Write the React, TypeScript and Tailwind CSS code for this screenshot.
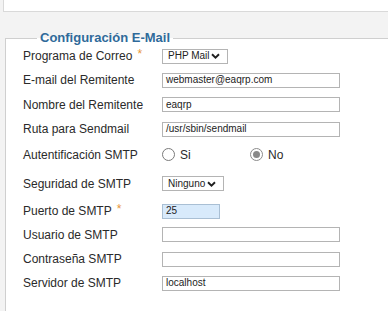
import React from "react";

const font = { fontFamily: '"Liberation Sans", Arial, sans-serif' };

const Star = () => <span className="ml-[5px] text-[12px] text-[#e8963a] relative -top-[2px]">*</span>;

const Chevron = () => (
  <svg width="9" height="6" viewBox="0 0 9 6" className="ml-auto">
    <path d="M1 1.2 L4.5 4.6 L8 1.2" fill="none" stroke="#1f1f1f" strokeWidth="1.9" />
  </svg>
);

const TextBox = ({ value = "", w = "w-[178px]", blue = false }: { value?: string; w?: string; blue?: boolean }) => (
  <div
    className={`${w} h-[15px] border flex items-center pl-[3px] text-[10px] text-[#222] leading-none ${
      blue ? "bg-[#d8eafb] border-[#a9bfd4]" : "bg-white border-[#b4b4b4]"
    }`}
  >
    {value}
  </div>
);

const SelectBox = ({ value, w }: { value: string; w: string }) => (
  <div className={`${w} h-[15px] border border-[#b4b4b4] bg-white flex items-center pl-[5px] pr-[7px] text-[10px] text-[#222] leading-none`}>
    <span>{value}</span>
    <Chevron />
  </div>
);

const Radio = ({ checked = false }: { checked?: boolean }) => (
  <span
    className={`w-[13px] h-[13px] rounded-full border flex items-center justify-center bg-white ${
      checked ? "border-[#8c8c8c]" : "border-[#7a7a7a]"
    }`}
  >
    {checked && <span className="w-[7px] h-[7px] rounded-full bg-[#8a8a8a]" />}
  </span>
);

const Row = ({ label, req = false, h, children }: { label: string; req?: boolean; h: string; children: React.ReactNode }) => (
  <div className={`flex items-center ${h}`}>
    <div className="w-[139px] text-[12px] text-[#2a2a2a] leading-none flex items-center">
      {label}
      {req && <Star />}
    </div>
    {children}
  </div>
);

export default function App() {
  return (
    <div className="w-[388px] h-[311px] overflow-hidden bg-[#f3f3f3]" style={font}>
      {/* upper panel edge */}
      <div className="ml-[3px] h-[12px] bg-white border-l border-b border-[#d9d9d9]" />

      <fieldset className="ml-[5px] mt-[18px] bg-white border-t border-l border-[#cfcfcf] pl-[17px] h-[320px]">
        <legend className="ml-[14px] px-[3px] text-[13px] font-bold text-[#2f6a9a] leading-[16px]">
          Configuración E-Mail
        </legend>

        <div className="-mt-[2px]">
          <Row label="Programa de Correo" req h="h-[24px]">
            <SelectBox value="PHP Mail" w="w-[66px]" />
          </Row>
          <Row label="E-mail del Remitente" h="h-[24px]">
            <TextBox value="webmaster@eaqrp.com" />
          </Row>
          <Row label="Nombre del Remitente" h="h-[25px]">
            <TextBox value="eaqrp" />
          </Row>
          <Row label="Ruta para Sendmail" h="h-[24px]">
            <TextBox value="/usr/sbin/sendmail" />
          </Row>
          <Row label="Autentificación SMTP" h="h-[27px]">
            <div className="flex items-center text-[12px] text-[#2a2a2a] leading-none">
              <Radio />
              <span className="ml-[5px] w-[70px]">Si</span>
              <Radio checked />
              <span className="ml-[5px]">No</span>
            </div>
          </Row>
          <Row label="Seguridad de SMTP" h="h-[31px]">
            <SelectBox value="Ninguno" w="w-[62px]" />
          </Row>
          <Row label="Puerto de SMTP" req h="h-[24px]">
            <TextBox value="25" w="w-[58px]" blue />
          </Row>
          <Row label="Usuario de SMTP" h="h-[23px]">
            <TextBox />
          </Row>
          <Row label="Contraseña SMTP" h="h-[26px]">
            <TextBox />
          </Row>
          <Row label="Servidor de SMTP" h="h-[22px]">
            <TextBox value="localhost" />
          </Row>
        </div>
      </fieldset>
    </div>
  );
}
